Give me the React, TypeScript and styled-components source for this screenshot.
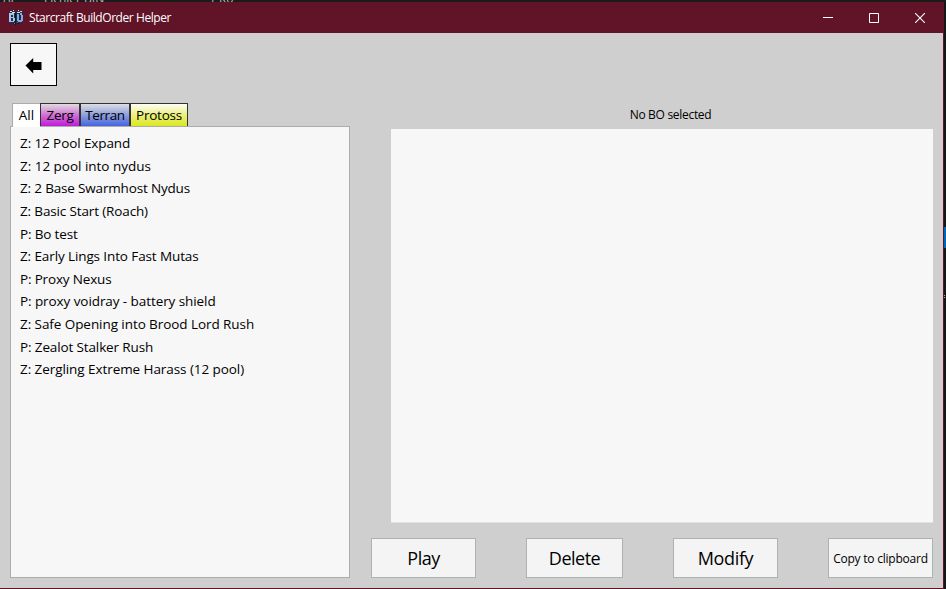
import React from 'react';
import styled, { createGlobalStyle } from 'styled-components';

const Global = createGlobalStyle`
  * { box-sizing: border-box; }
  body { margin: 0; overflow: hidden; background: #161618; }
  button { font: inherit; color: inherit; padding: 0; margin: 0; border-radius: 0; }
`;

const Desktop = styled.div`
  width: 946px;
  height: 589px;
  display: grid;
  grid-template-columns: 944px 2px;
  grid-template-rows: 2px 587px;
  background: #161618;
  color: #000;
  font-family: "Open Sans", "Noto Sans", sans-serif;
`;

const Backdrop = styled.div`
  grid-column: 1 / -1;
  height: 2px;
  overflow: hidden;
  display: flex;
  align-items: flex-end;
  padding-left: 3px;
  background: #1b1b1b;
  color: #b8b8b8;
  font-size: 12px;
  line-height: 7px;
`;

const BackdropCell = styled.span<{ $w: number }>`
  flex: none;
  width: ${p => p.$w}px;
  white-space: nowrap;
`;

const Edge = styled.div`
  display: flex;
  flex-direction: column;
  padding-top: 225px;
`;

const EdgeAccent = styled.i`
  height: 21px;
  background: #0067b8;
`;

const EdgeDot = styled.i<{ $gap: number }>`
  width: 1px;
  height: 1px;
  margin-top: ${p => p.$gap}px;
  background: #b9a58c;
`;

const Window = styled.main`
  display: flex;
  flex-direction: column;
  background: #cfcfcf;
  border-right: 1px solid #611327;
  border-bottom: 1px solid #611327;
`;

const TitleBar = styled.header`
  flex: none;
  height: 31px;
  margin-right: -1px;
  padding-left: 8px;
  display: flex;
  align-items: center;
  background: #611327;
  color: #fff;
`;

const Title = styled.h1`
  margin: 0 auto 0 5px;
  font-size: 12px;
  font-weight: 400;
  line-height: 16px;
  letter-spacing: -0.43px;
`;

const CaptionButton = styled.button`
  width: 46px;
  height: 31px;
  display: grid;
  place-items: center;
  border: 0;
  background: none;
`;

const CaptionButtons = styled.div`
  display: flex;
  padding-right: 1px;
`;

const Body = styled.div`
  flex: 1;
  display: flex;
  flex-direction: column;
  padding: 10px;
`;

const BackButton = styled.button`
  width: 47px;
  height: 43px;
  padding-top: 2px;
  display: grid;
  place-items: center;
  border: 1px solid #000;
  background: #f7f7f7;
`;

const Columns = styled.div`
  display: flex;
  justify-content: space-between;
  margin-top: 17px;
  height: 475px;
`;

const Library = styled.section`
  width: 340px;
  display: flex;
  flex-direction: column;
`;

const Tabs = styled.nav`
  display: flex;
  height: 24px;
  margin: 0 0 -1px 2px;
`;

const Tab = styled.button<{ $w: number; $fill: string; $active?: boolean; $spacing: number }>`
  position: relative;
  width: ${p => p.$w}px;
  height: ${p => (p.$active ? 24 : 23)}px;
  padding-bottom: ${p => (p.$active ? 1 : 0)}px;
  border: 1px solid ${p => (p.$active ? '#acacac' : '#333')};
  border-width: ${p => (p.$active ? '1px 0 0 1px' : '1px 1px 0 1px')};
  background: ${p => p.$fill};
  font-size: 13.5px;
  line-height: 22px;
  letter-spacing: ${p => p.$spacing}px;
  white-space: nowrap;
`;

const BuildList = styled.ul`
  flex: 1;
  margin: 0;
  padding: 5.1px 9px;
  list-style: none;
  border: 1px solid #acacac;
  background: #f7f7f7;
`;

const Build = styled.li<{ $spacing: number }>`
  height: 22.62px;
  font-size: 13.5px;
  line-height: 22.62px;
  letter-spacing: ${p => p.$spacing}px;
  white-space: nowrap;
`;

const Details = styled.section`
  width: 562px;
  display: flex;
  flex-direction: column;
`;

const Selection = styled.div`
  height: 26px;
  padding: 2px 0 0 37px;
  text-align: center;
  font-size: 12px;
  line-height: 20px;
  letter-spacing: -0.3px;
`;

const Notes = styled.div`
  height: 394px;
  margin-left: 20px;
  background: #f7f7f7;
  border-bottom: 1px solid #e2e2e2;
`;

const Actions = styled.footer`
  display: flex;
  justify-content: space-between;
  margin-top: 15px;
`;

const Action = styled.button<{ $w?: number; $small?: boolean; $spacing: number }>`
  width: ${p => p.$w ?? 105}px;
  height: 40px;
  padding-top: ${p => (p.$small ? 2 : 0)}px;
  border: 1px solid #adb2b5;
  background: #f4f4f4;
  font-size: ${p => (p.$small ? 12 : 18)}px;
  line-height: ${p => (p.$small ? 36 : 38)}px;
  letter-spacing: ${p => p.$spacing}px;
  white-space: nowrap;
`;

const AppIcon = () => (
  <svg width="16" height="17" viewBox="0 0 16 17" shapeRendering="crispEdges">
    <path d="M1 3h14v11H1z" fill="#1b2f50" />
    <path d="M3 1h3v2H3zM10 1h3v2h-3z" fill="#16333b" />
    <path d="M2 2h2v1H2zM5 1h1v1H5zM4 3h3v1H4zM10 1h1v1h-1zM12 2h2v1h-2zM9 3h3v1H9z" fill="#e2e3cf" />
    <path d="M1 4h5v2H1zM1 6h2v7H1zM5 6h1v2H5zM3 8h3v1H3zM5 9h2v3H5zM2 12h4v1H2z" fill="#a5c4e8" />
    <path d="M9 5h2v7H9zM12 4h2v2h-2zM13 6h2v6h-2zM10 11h4v2h-4z" fill="#86abd9" />
    <path d="M7 4h1v12H7zM5 14h2v1H5zM9 14h2v1H9z" fill="#101720" />
    <path d="M6 14h1v1H6zM9 13h1v1H9z" fill="#5587b7" />
  </svg>
);

const builds: [string, number][] = [
  ['Z: 12 Pool Expand', -0.1],
  ['Z: 12 pool into nydus', -0.02],
  ['Z: 2 Base Swarmhost Nydus', -0.17],
  ['Z: Basic Start (Roach)', -0.14],
  ['P: Bo test', -0.15],
  ['Z: Early Lings Into Fast Mutas', -0.11],
  ['P: Proxy Nexus', -0.17],
  ['P: proxy voidray - battery shield', -0.08],
  ['Z: Safe Opening into Brood Lord Rush', -0.07],
  ['P: Zealot Stalker Rush', -0.13],
  ['Z: Zergling Extreme Harass (12 pool)', -0.07],
];

export default function App() {
  return (
    <>
      <Global />
      <Desktop>
        <Backdrop aria-hidden>
          <BackdropCell $w={41}>AL</BackdropCell>
          <BackdropCell $w={165}>Fichier BIN</BackdropCell>
          <BackdropCell $w={40}>1 Ko</BackdropCell>
        </Backdrop>
        <Window>
          <TitleBar>
            <AppIcon />
            <Title>Starcraft BuildOrder Helper</Title>
            <CaptionButtons>
              <CaptionButton aria-label="Minimize">
                <svg width="10" height="10" shapeRendering="crispEdges"><path d="M0 4h10v1H0z" fill="#fff" /></svg>
              </CaptionButton>
              <CaptionButton aria-label="Maximize">
                <svg width="10" height="10"><path d="M.5.5h9v9h-9z" fill="none" stroke="#fff" /></svg>
              </CaptionButton>
              <CaptionButton aria-label="Close">
                <svg width="10" height="10"><path d="M0 0l10 10M10 0L0 10" fill="none" stroke="#fff" strokeWidth="1.1" /></svg>
              </CaptionButton>
            </CaptionButtons>
          </TitleBar>
          <Body>
            <BackButton aria-label="Back">
              <svg width="17" height="17" viewBox="0 0 17 17"><path d="M.5 8.5L8.2 1v4H16.5v8H8.2v3.5z" fill="#000" /></svg>
            </BackButton>
            <Columns>
              <Library>
                <Tabs>
                  <Tab $w={28} $active $fill="#fff" $spacing={0}>All</Tab>
                  <Tab $w={40} $fill="linear-gradient(#e0dbe0, #d070d4 50%, #c11bda)" $spacing={-0.25}>Zerg</Tab>
                  <Tab $w={50} $fill="linear-gradient(#dcdee4, #8d9edb 50%, #4465e1)" $spacing={-0.4}>Terran</Tab>
                  <Tab $w={58} $fill="linear-gradient(#fdfdf5, #eaf07e 50%, #dce81c)" $spacing={-0.25}>Protoss</Tab>
                </Tabs>
                <BuildList>
                  {builds.map(([name, spacing]) => <Build key={name} $spacing={spacing}>{name}</Build>)}
                </BuildList>
              </Library>
              <Details>
                <Selection>No BO selected</Selection>
                <Notes />
                <Actions>
                  <Action $spacing={-0.5}>Play</Action>
                  <Action $w={97} $spacing={-0.5}>Delete</Action>
                  <Action $spacing={-0.35}>Modify</Action>
                  <Action $small $spacing={-0.22}>Copy to clipboard</Action>
                </Actions>
              </Details>
            </Columns>
          </Body>
        </Window>
        <Edge>
          <EdgeAccent />
          <EdgeDot $gap={47} />
          <EdgeDot $gap={1} />
        </Edge>
      </Desktop>
    </>
  );
}
